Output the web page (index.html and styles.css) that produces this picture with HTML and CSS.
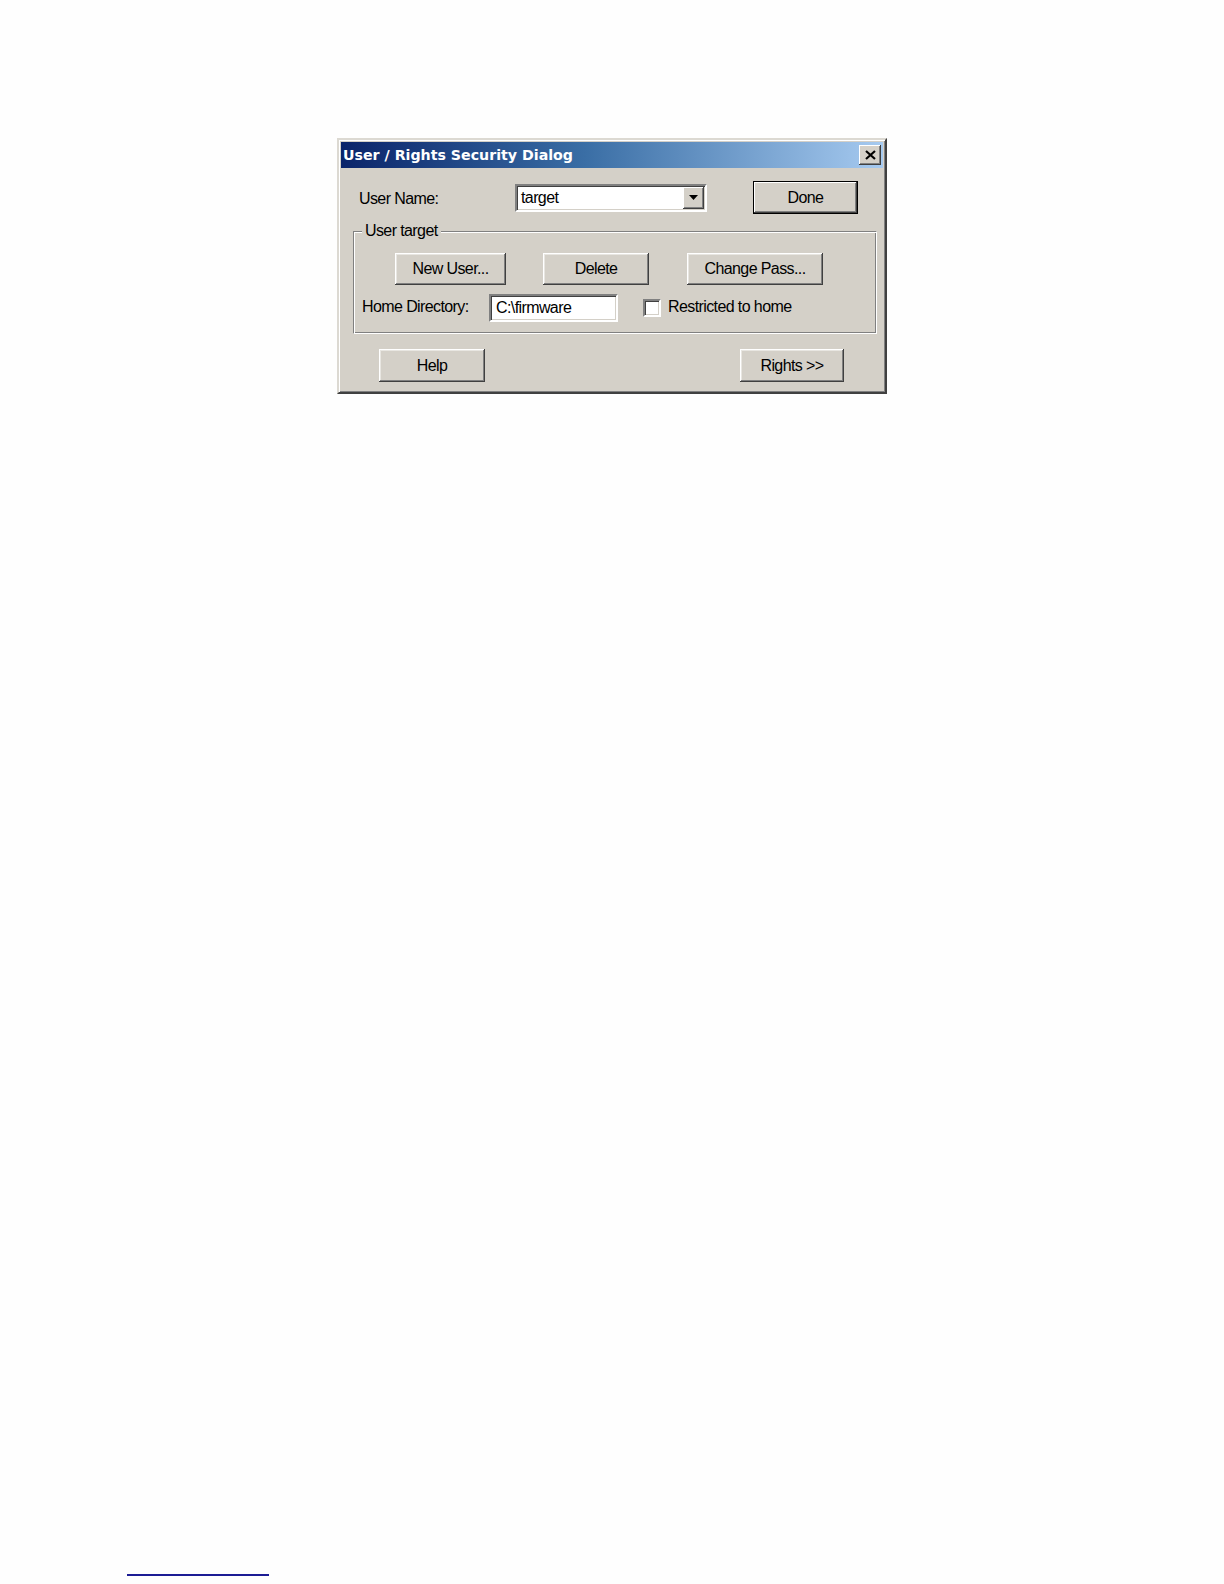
FILE: index.html
```html
<!DOCTYPE html>
<html>
<head>
<meta charset="utf-8">
<title>User / Rights Security Dialog</title>
<link rel="stylesheet" href="styles.css">
</head>
<body>
<div class="page">
  <div class="dialog">
    <div class="titlebar">
      <span class="title">User / Rights Security Dialog</span>
      <span class="close">
        <svg width="11" height="10" viewBox="0 0 11 10"><path d="M1 1 L10 9 M10 1 L1 9" stroke="#000" stroke-width="2.2" fill="none"/></svg>
      </span>
    </div>
    <div class="row row-top">
      <span class="lbl lbl-user">User Name:</span>
      <div class="combo">
        <span class="combo-text">target</span>
        <span class="combo-btn">
          <svg width="9" height="5" viewBox="0 0 9 5"><path d="M0 0 H9 L4.5 5 Z" fill="#000"/></svg>
        </span>
      </div>
      <button class="btn btn-default btn-done">Done</button>
    </div>
    <div class="group">
      <span class="legend">User target</span>
      <div class="row group-buttons">
        <button class="btn btn-new">New User...</button>
        <button class="btn btn-delete">Delete</button>
        <button class="btn btn-change">Change Pass...</button>
      </div>
      <div class="row group-home">
        <span class="lbl lbl-home">Home Directory:</span>
        <div class="edit">C:\firmware</div>
        <span class="check"></span>
        <span class="lbl lbl-check">Restricted to home</span>
      </div>
    </div>
    <div class="row row-bottom">
      <button class="btn btn-help">Help</button>
      <button class="btn btn-rights">Rights &gt;&gt;</button>
    </div>
  </div>
  <div class="footline"></div>
</div>
</body>
</html>
```
FILE: styles.css
```css
html, body {
  margin: 0;
  padding: 0;
  background: #fefefe;
}

.page {
  display: flex;
  flex-direction: column;
  align-items: flex-start;
  width: 1224px;
  height: 1584px;
}

.dialog {
  box-sizing: border-box;
  width: 550px;
  margin: 138px 0 0 337px;
  padding: 2px;
  background: #d4d0c8;
  border: 2px solid;
  border-color: #dcd9d2 #404040 #404040 #dcd9d2;
  box-shadow: inset 1px 1px #ffffff, inset -1px -1px #808080;
  display: flex;
  flex-direction: column;
  font-family: "Liberation Sans", Arial, sans-serif;
  font-size: 16px;
  letter-spacing: -0.6px;
  color: #000;
}

.titlebar {
  height: 26px;
  display: flex;
  align-items: center;
  justify-content: space-between;
  padding: 0 2px 0 2px;
  background: linear-gradient(to right, #0a246a 0%, #3a6ea5 45%, #a6caf0 100%);
}

.title {
  font-family: "DejaVu Sans", Verdana, sans-serif;
  font-weight: bold;
  font-size: 14.2px;
  letter-spacing: 0;
  color: #ffffff;
  white-space: nowrap;
}

.close {
  box-sizing: border-box;
  width: 22px;
  height: 20px;
  display: flex;
  align-items: center;
  justify-content: center;
  background: #d4d0c8;
  box-shadow: inset -1px -1px #404040, inset 1px 1px #ffffff, inset -2px -2px #808080;
}

.row {
  display: flex;
  align-items: center;
}

.row-top {
  margin: 13px 0 0 18px;
}

.lbl {
  white-space: nowrap;
}

.lbl-user {
  width: 156px;
  padding-top: 2px;
}

.combo {
  box-sizing: border-box;
  width: 192px;
  height: 28px;
  display: flex;
  align-items: center;
  justify-content: space-between;
  background: #ffffff;
  border: 2px solid;
  border-color: #808080 #ffffff #ffffff #808080;
  box-shadow: inset 1px 1px #404040, inset -1px -1px #d4d0c8;
  padding: 1px 1px 1px 4px;
}

.combo-text {
  padding-top: 1px;
}

.combo-btn {
  box-sizing: border-box;
  width: 21px;
  height: 22px;
  display: flex;
  align-items: center;
  justify-content: center;
  background: #d4d0c8;
  box-shadow: inset -1px -1px #404040, inset 1px 1px #ffffff, inset -2px -2px #808080;
}

.btn {
  box-sizing: border-box;
  height: 32px;
  padding: 0;
  border: none;
  background: #d4d0c8;
  box-shadow: inset -1px -1px #404040, inset 1px 1px #ffffff, inset -2px -2px #808080, inset 2px 2px #e8e6e1;
  font-family: "Liberation Sans", Arial, sans-serif;
  font-size: 16px;
  letter-spacing: -0.6px;
  color: #000;
  text-align: center;
}

.btn-default {
  border: 1px solid #000;
  box-shadow: inset -1px -1px #404040, inset 1px 1px #ffffff, inset -2px -2px #808080;
}

.btn-done {
  width: 105px;
  height: 33px;
  margin-left: 46px;
}

.group {
  position: relative;
  box-sizing: border-box;
  width: 524px;
  height: 103px;
  margin: 17px 0 0 12px;
  padding: 20px 0 10px 0;
  border: 1px solid #808080;
  border-right-color: #ffffff;
  border-bottom-color: #ffffff;
  box-shadow: inset 1px 1px #ffffff, inset -1px -1px #808080;
  display: flex;
  flex-direction: column;
}

.legend {
  position: absolute;
  top: -11px;
  left: 8px;
  padding: 0 3px 0 3px;
  background: #d4d0c8;
  line-height: 20px;
}

.group-buttons {
  margin: 1px 0 0 41px;
}

.btn-new {
  width: 111px;
}

.btn-delete {
  width: 106px;
  margin-left: 37px;
}

.btn-change {
  width: 136px;
  margin-left: 38px;
}

.group-home {
  margin: 9px 0 0 8px;
}

.lbl-home {
  width: 127px;
  padding-bottom: 3px;
}

.edit {
  box-sizing: border-box;
  width: 129px;
  height: 28px;
  padding: 3px 0 0 5px;
  background: #ffffff;
  border: 2px solid;
  border-color: #808080 #ffffff #ffffff #808080;
  box-shadow: inset 1px 1px #404040, inset -1px -1px #d4d0c8;
  white-space: nowrap;
}

.check {
  box-sizing: border-box;
  width: 18px;
  height: 18px;
  margin-left: 25px;
  background: #ffffff;
  border: 2px solid;
  border-color: #808080 #ffffff #ffffff #808080;
  box-shadow: inset 1px 1px #404040, inset -1px -1px #d4d0c8;
}

.lbl-check {
  margin-left: 7px;
  padding-bottom: 2px;
}

.row-bottom {
  margin: 15px 0 8px 38px;
}

.btn-help {
  width: 106px;
  height: 33px;
}

.btn-rights {
  width: 104px;
  height: 33px;
  margin-left: 255px;
}

.footline {
  width: 142px;
  height: 2px;
  margin: 1180px 0 0 127px;
  background: #1c1c94;
}
```
